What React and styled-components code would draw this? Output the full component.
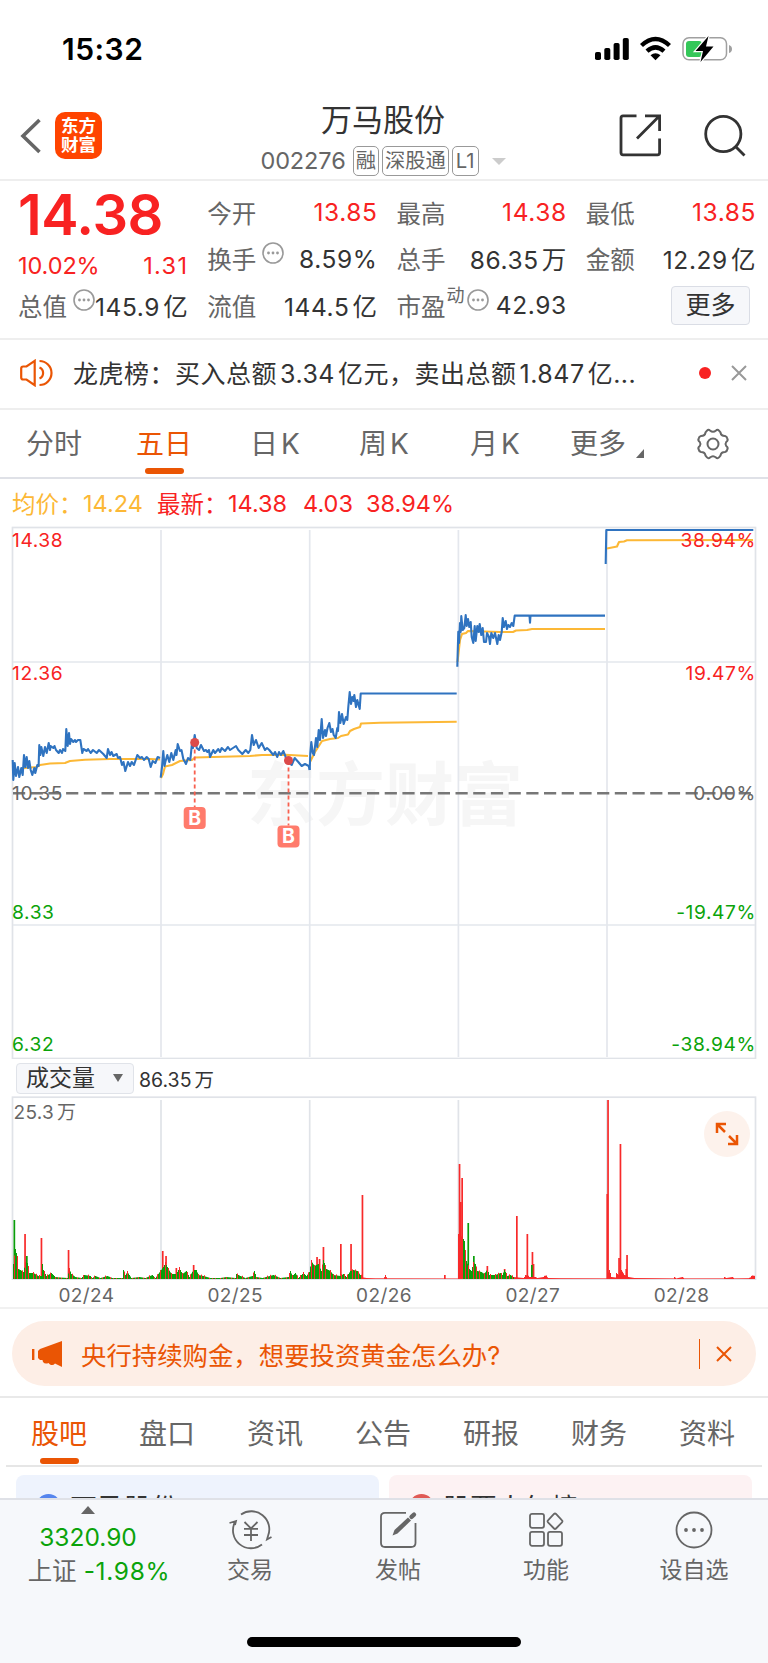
import React from 'react';
import styled, { createGlobalStyle } from 'styled-components';

const FONT = `Inter, "Noto Sans CJK SC", sans-serif`;

const GlobalStyle = createGlobalStyle`
  * {
    box-sizing: border-box;
  }
  body {
    margin: 0;
    background: #ffffff;
    color: #333333;
    font-family: ${FONT};
  }
  svg {
    display: block;
    flex: none;
  }
`;

const Screen = styled.div`
  display: flex;
  flex-direction: column;
  width: 768px;
  height: 1663px;
  overflow: hidden;
  white-space: nowrap;
`;

const StatusBar = styled.div`
  display: flex;
  justify-content: space-between;
  height: 98px;
  padding: 29px 36px 0 62px;
`;

const Clock = styled.div`
  font-size: 30px;
  line-height: 40px;
  font-weight: 600;
  color: #000000;
  letter-spacing: 0.5px;
`;

const Header = styled.div`
  display: flex;
  height: 83px;
  padding: 0 22px 0 20px;
  border-bottom: 2px solid #eeeeee;
`;

const HeaderSide = styled.div`
  display: flex;
  align-items: flex-start;
  justify-content: ${(p) => (p.$end ? 'flex-end' : 'flex-start')};
  gap: ${(p) => (p.$end ? 43 : 14)}px;
  width: 190px;
  padding-top: 14px;
`;

const AppLogo = styled.div`
  width: 47px;
  height: 47px;
  padding: 5px 6px;
  border-radius: 10px;
  background: #ff4400;
  color: #ffffff;
  font-size: 17.5px;
  font-weight: 700;
  line-height: 18.5px;
`;

const HeaderCenter = styled.div`
  flex: 1;
  display: flex;
  flex-direction: column;
  align-items: center;
`;

const StockName = styled.div`
  font-size: 31px;
  line-height: 40px;
  padding-top: 2px;
`;

const CodeRow = styled.div`
  display: flex;
  align-items: center;
  height: 30px;
  margin-top: 6px;
  color: #666666;
`;

const Code = styled.div`
  font-size: 23.5px;
  margin: -2px 7px 0 0;
  letter-spacing: -0.1px;
`;

const Tag = styled.div`
  height: 30px;
  margin-right: 3px;
  padding: 0 ${(p) => p.$pad || 2}px;
  border: 1.5px solid #999999;
  border-radius: 5px;
  font-size: 20.3px;
  line-height: 28px;
`;

const Quote = styled.div`
  display: flex;
  gap: 20px;
  height: 159px;
  padding: 0 13px 0 18px;
  border-bottom: 2px solid #eeeeee;
`;

const QuoteColumn = styled.div`
  flex: 1 1 0;
  min-width: 0;
  display: flex;
  flex-direction: column;
  padding-top: ${(p) => (p.$main ? 0 : 8)}px;
`;

const BigPrice = styled.div`
  height: 67px;
  font-size: 56px;
  font-weight: 600;
  line-height: 68px;
  letter-spacing: -0.4px;
  color: #f82222;
`;

const Change = styled.div`
  display: flex;
  justify-content: space-between;
  height: 34.5px;
  font-size: 23.5px;
  line-height: 35px;
  letter-spacing: -0.1px;
  color: #f82222;

  span:last-child {
    letter-spacing: 1.3px;
    margin-right: -1px;
  }
`;

const Stat = styled.div`
  display: flex;
  align-items: center;
  justify-content: space-between;
  height: 46.6px;
`;

const StatLabel = styled.div`
  display: flex;
  align-items: center;
  font-size: 24.5px;
  color: #666666;

  svg {
    margin: -11px 0 0 6px;
  }
  sup {
    font-size: 18px;
    line-height: 18px;
    margin: -18px -4px 0 1px;
  }
`;

const StatValue = styled.div`
  font-size: 24.5px;
  letter-spacing: 0.6px;
  margin-right: -1px;
  color: ${(p) => (p.$up ? '#f82222' : '#333333')};
`;

const Unit = styled.span`
  margin-left: 3px;
`;

const MoreButton = styled.div`
  width: 79px;
  height: 39px;
  margin: 0 5px 0 auto;
  border: 1.5px solid #dadde5;
  border-radius: 4px;
  background: #f6f7fa;
  font-size: 25px;
  line-height: 36px;
  text-align: center;
`;

const News = styled.div`
  display: flex;
  align-items: center;
  height: 70px;
  padding: 0 21px 2px 20px;
  border-bottom: 2px solid #eeeeee;
  font-size: 25px;
`;

const NewsText = styled.div`
  flex: 1;
  margin: -3px 0 0 20px;
  letter-spacing: 0.5px;
`;

const RedDot = styled.div`
  width: 12px;
  height: 12px;
  margin-right: 20px;
  border-radius: 50%;
  background: #f82222;
`;

const PeriodTabs = styled.div`
  display: flex;
  height: 69px;
  padding-left: 26px;
  border-bottom: 2px solid #dfe1e7;
`;

const PeriodTab = styled.div`
  display: flex;
  flex-direction: column;
  align-items: flex-start;
  width: ${(p) => p.$w}px;
  height: 67px;
  padding-top: 15px;
  font-size: 28px;
  line-height: 38px;
  color: ${(p) => (p.$active ? '#ea5504' : '#666666')};
`;

const TabLine = styled.div`
  width: 39px;
  height: 6px;
  margin: ${(p) => p.$top}px 0 0 9px;
  border-radius: 3px;
  background: #ea5504;
`;

const MoreMark = styled.span`
  display: inline-block;
  margin-left: 10px;
  border-left: 8px solid transparent;
  border-bottom: 9px solid #666666;
  vertical-align: -4px;
`;

const Legend = styled.div`
  display: flex;
  align-items: center;
  height: 47px;
  padding: 1px 0 0 12px;
  font-size: 23.5px;
  color: #f82222;
`;

const LegendItem = styled.div`
  width: ${(p) => p.$w}px;
  color: ${(p) => (p.$avg ? '#fcb836' : '#f82222')};
`;

const ChartBox = styled.div`
  height: ${(p) => p.$h}px;
`;

const IndicatorRow = styled.div`
  display: flex;
  align-items: center;
  gap: 5px;
  height: 37px;
  padding: 1px 0 0 16px;
  font-size: 19.5px;
`;

const IndicatorSelect = styled.div`
  display: flex;
  align-items: center;
  justify-content: space-between;
  width: 118px;
  height: 31px;
  padding: 0 10px 0 9px;
  border: 1.5px solid #e0e3e9;
  border-radius: 4px;
  background: #f6f7fa;
  font-size: 23px;
  line-height: 26px;

  b {
    font-weight: 400;
    margin-top: -1px;
  }
`;

const DownMark = styled.span`
  border: ${(p) => p.$size}px solid transparent;
  border-top: ${(p) => p.$size + (p.$size < 6 ? 3 : 0)}px solid ${(p) => p.$color};
  border-bottom: 0;
`;

const VolumeBox = styled.div`
  position: relative;
  height: 184px;
`;

const ExpandButton = styled.div`
  position: absolute;
  top: 15px;
  right: 18px;
  display: flex;
  align-items: center;
  justify-content: center;
  width: 46px;
  height: 46px;
  border-radius: 50%;
  background: #fdf2ec;
`;

const Dates = styled.div`
  display: grid;
  grid-template-columns: repeat(5, 1fr);
  height: 29px;
  padding: 0 12px;
  border-bottom: 2px solid #f1f1f1;
  font-size: 19px;
  line-height: 31px;
  letter-spacing: 0.4px;
  text-align: center;
  color: #666666;
`;

const BannerWrap = styled.div`
  height: 89px;
  padding: 12px 12px 0;
  border-bottom: 2px solid #e9e9e9;
`;

const Banner = styled.div`
  display: flex;
  align-items: center;
  height: 65px;
  padding: 0 24px 0 20px;
  border-radius: 33px;
  background: #fdeee6;
  color: #ea5504;
  font-size: 25.4px;
`;

const BannerText = styled.div`
  flex: 1;
  margin-left: 17px;
  padding-top: 1px;
`;

const Divider = styled.div`
  width: 1.5px;
  height: 30px;
  margin-right: 16px;
  background: #ea5504;
`;

const InfoTabs = styled.div`
  display: flex;
  height: 69px;
  margin: 0 6px;
  padding-left: 25px;
  border-bottom: 2px solid #e6e6e6;
`;

const InfoTab = styled.div`
  flex: none;
  width: 108px;
  padding-top: 17px;
  font-size: 28px;
  line-height: 38px;
  color: ${(p) => (p.$active ? '#ea5504' : '#666666')};

  &:last-child {
    width: 60px;
  }
`;

const Cards = styled.div`
  display: flex;
  gap: 10px;
  height: 31px;
  padding: 8px 16px 0;
  overflow: hidden;
`;

const Card = styled.div`
  display: flex;
  align-items: flex-start;
  gap: 9px;
  flex: 1;
  height: 70px;
  padding: 16px 20px 0;
  border-radius: 8px;
  background: ${(p) => (p.$red ? '#fdf2f3' : '#eef3fd')};
  font-size: 27px;
  line-height: 36px;
`;

const CardDot = styled.div`
  width: 25px;
  height: 25px;
  margin-top: 3px;
  border-radius: 50%;
  background: ${(p) => (p.$red ? '#e05a55' : '#5585ee')};
`;

const BottomBar = styled.div`
  flex: 1;
  display: flex;
  flex-direction: column;
  align-items: center;
  justify-content: space-between;
  padding-bottom: 16px;
  border-top: 2px solid #dfe1e7;
  background: #f6f8fb;
`;

const Nav = styled.div`
  display: flex;
  width: 100%;
`;

const IndexBlock = styled.div`
  display: flex;
  flex-direction: column;
  align-items: center;
  width: 176px;
  padding-top: 6px;
  color: #0aa30a;
  font-size: 24.5px;
`;

const UpMark = styled.div`
  border: 7px solid transparent;
  border-top: 0;
  border-bottom: 8px solid #666666;
`;

const IndexValue = styled.div`
  height: 34px;
  margin-top: 5px;
  line-height: 36px;
`;

const IndexChange = styled.div`
  padding-left: 22px;
  line-height: 36px;
  letter-spacing: 0.7px;

  span {
    color: #666666;
    margin-right: 7px;
    letter-spacing: 0;
  }
`;

const NavItem = styled.div`
  display: flex;
  flex-direction: column;
  align-items: center;
  width: 148px;
  padding-top: 6px;
  color: #666666;
  font-size: 23px;
  line-height: 36px;
`;

const HomeIndicator = styled.div`
  width: 274px;
  height: 10px;
  border-radius: 5px;
  background: #000000;
`;

function StatusIcons() {
  return (
    <svg width="138" height="28" viewBox="594 36 138 28" style={{ marginTop: 7 }}>
      <rect x="595" y="52" width="6" height="8" rx="1.8" />
      <rect x="604.3" y="48" width="6" height="12" rx="1.8" />
      <rect x="613.6" y="43" width="6" height="17" rx="1.8" />
      <rect x="622.8" y="38" width="6" height="22" rx="1.8" />
      <g fill="none" stroke="#000" strokeWidth="4.4">
        <path d="M641.5 45.5 Q655.5 32.5 669.5 45.5" />
        <path d="M647 51.2 Q655.5 43.5 664 51.2" />
      </g>
      <path d="M650.5 55.3 Q655.5 51.4 660.5 55.3 L655.5 60.2 Z" />
      <rect x="683" y="37.8" width="43.5" height="22" rx="6" fill="none" stroke="#a0a0a0" strokeWidth="1.5" />
      <path d="M729 45 q3 1 3 4 q0 3 -3 4 z" fill="#a0a0a0" />
      <rect x="686" y="41" width="16" height="16" rx="3" fill="#34c759" />
      <path
        d="M708.5 36 L695.5 51 L703 51 L700.5 62 L713.5 46.5 L706 46.5 Z"
        stroke="#fff"
        strokeWidth="2.4"
        paintOrder="stroke"
      />
    </svg>
  );
}

function BackIcon() {
  return (
    <svg width="21" height="47" fill="none" stroke="#666" strokeWidth="3.6">
      <path d="M19.5 8 L3 24 L19.5 40" />
    </svg>
  );
}

function ShareIcon() {
  return (
    <svg width="42" height="43" fill="none" stroke="#333" strokeWidth="2.8" style={{ marginTop: 2 }}>
      <path d="M17.5 1.8 H4 Q2 1.8 2 4 V38.5 Q2 40.8 4 40.8 H38.5 Q40.6 40.8 40.6 38.5 V24.5" />
      <path d="M26 1.8 H40.6 V17 M39.6 2.8 L18 24.6" />
    </svg>
  );
}

function SearchIcon() {
  return (
    <svg width="42" height="43" fill="none" stroke="#333" strokeWidth="2.8" style={{ marginTop: 2 }}>
      <circle cx="19.3" cy="20" r="17.6" />
      <path d="M31.5 32.5 L40.5 41.5" />
    </svg>
  );
}

function InfoIcon() {
  return (
    <svg width="22" height="22" fill="#999">
      <circle cx="11" cy="11" r="10" fill="none" stroke="#999" strokeWidth="1.6" />
      <circle cx="6.5" cy="11" r="1.4" />
      <circle cx="11" cy="11" r="1.4" />
      <circle cx="15.5" cy="11" r="1.4" />
    </svg>
  );
}

function SpeakerIcon() {
  return (
    <svg width="33" height="28" fill="none" stroke="#ea5504" strokeWidth="2.2">
      <path d="M14.7 1.8 L6.5 7.5 H3.2 Q1.2 7.5 1.2 9.5 V18.5 Q1.2 20.5 3.2 20.5 H6.5 L14.7 26.2 Z" />
      <path d="M19.5 8.5 A6 6 0 0 1 19.5 19.5 M19.5 2 A12 12 0 0 1 19.5 26" />
    </svg>
  );
}

function CloseIcon({ color }) {
  return (
    <svg width="16" height="16" fill="none" stroke={color} strokeWidth="2">
      <path d="M1 1 L15 15 M15 1 L1 15" />
    </svg>
  );
}

function SettingsIcon() {
  return (
    <svg width="34" height="32" fill="none" stroke="#666" strokeWidth="2" style={{ marginTop: 18 }}>
      <path d="M11 2.6 Q12.5 1 14 2.5 Q17 5 20 2.5 Q21.5 1 23 2.6 L24.5 4.5 Q25 8 29 8 Q31 8.5 31.3 10.5 Q32.4 12.5 30.2 14 Q28.8 16 30.2 18 Q32.4 19.5 31.3 21.5 Q31 23.5 29 24 Q25 24 24.5 27.5 L23 29.4 Q21.5 31 20 29.5 Q17 27 14 29.5 Q12.5 31 11 29.4 L9.5 27.5 Q9 24 5 24 Q3 23.5 2.7 21.5 Q1.6 19.5 3.8 18 Q5.2 16 3.8 14 Q1.6 12.5 2.7 10.5 Q3 8.5 5 8 Q9 8 9.5 4.5 Z" />
      <circle cx="17" cy="16" r="5.5" />
    </svg>
  );
}

const priceDays = [
  '12.7,760 13.3,780 14.7,763 16,776 18,767 19.3,777 21.3,768 22.7,775 24,755 25.3,767 26.7,757 28,768 29.3,761 30.7,770 32.3,775 34.3,768 35.3,773 37.3,765 38.6,766 39.3,745 40.3,755 41.3,747 43.3,756 45,747 46.7,753 48.7,743 50,750 50.7,746 53.3,748 54.5,746 56,750 58.7,753 60,750 62,753 63,749 65.3,751 66.3,729 67.7,746 69,733 70,744 71,739 73.3,742 75,740 76,742 78,740 80.3,740 82.3,753 83.5,749 86.7,751 88,749 90.7,753 93,750 96.7,753 99,750 103.3,754 106.7,758 108,749 110,755 111.5,752 113.3,756 116.7,754 118,758 120,757 122,765 123.5,762 125.3,771 128,762 130,766 131.7,762 134,765 137.3,755 140,758 142,757 144,760 146.7,757 148.7,759 150.7,767 152.7,761 155.3,763 157.7,757 160,758',
  '160.7,777.7 162,767 163.3,751 164.5,766 165.3,762 167.3,755 169.3,762 171.3,753 173.3,760 175.7,750 176.5,755 177.7,744 180,751 181.5,750 183.3,759 186,764 188,758 190.3,760 192,743 193,748 194.7,735 196.7,748 199,750 201,745 204,751 206,750 207.3,752 209,750 210,757 213.3,750 215,753 218.3,749 220,752 221.7,748 225,751 228,747 230,750 233,748 236,746 238.3,750 242.3,754 245.7,750 248.3,753 250.3,750 252,735 253.7,745 256,740 258.7,748 261.7,743 265,750 267,748 269.3,750 273.3,755 275,752 277.3,757 279,752 281,755 283.3,751 285.3,756 287.3,762 291.7,765 294.7,758 298.3,762 301.7,766 305,764 308.7,766 309.7,770',
  '309.7,770 310.3,753 311.3,742 312.7,753 314,755 316,738 317.3,747 318.7,730 320,740 321.7,719 323,738 325,730 326,736 327.5,728 329.3,723 331,732 332.5,729 333.7,735 335.7,738 337.3,728 338,731 339,712 340.3,723 342,714 343.7,724 346,717 347.3,720 348.3,707 349.7,692 351,704 352.3,697 353.5,701 354.3,695 356,707 357.3,700 359.7,709 360.7,693.5 456.7,693.5',
  '457.3,666.7 458.3,631.7 459,643 460,623 460.7,632 461.3,616 462.7,630 464.3,628 465.7,615 466.7,626 468,619 469.3,627 470.7,622 471.7,637 473.3,643 474.7,626 475.7,641 477.3,626 478.7,632 479.7,624 481.3,635 482.7,628 484,642 486,642 487,633 489,637 490,644 491.3,633 493.3,638 495,633 497.3,644 498.7,635 500,640 501.7,632 502.7,618 504,627 505.7,621 507,629 508.3,625 510,627 511.7,623 513.3,626 514.7,615.6 529.5,615.6 530,622.7 530.5,615.6 605,615.6',
  '605.7,564 606.3,530 753.3,530',
];

const averageDays = [
  '24,768 37,767 40,765 50,763.5 65,763 70,761 85,759.7 110,759 150,759 160,759.5',
  '161,778 163,774 165,766.5 172,765 180,761 192,760 195,757.5 250,756 262,755 285,754.7 308,756',
  '310,762 315,752 322,741 330,739 338,738 341,736 348,734.5 350,731 354,729 360,727 361,723.5 380,722.8 456.7,721.8',
  '457.5,662 460,640 462,634 466,633 468,631 500,632 513,632 516,630.5 527,630 532,629 605,629',
  '607,548.5 617,546.5 619,542 624,541.5 627,540.3 753,540',
];

const priceLabels = [
  { y: 546.5, left: '14.38', right: '38.94%', color: '#f82222' },
  { y: 679.5, left: '12.36', right: '19.47%', color: '#f82222' },
  { y: 799.5, left: '10.35', right: '0.00%', color: '#666666' },
  { y: 918.5, left: '8.33', right: '-19.47%', color: '#0aa30a' },
  { y: 1051, left: '6.32', right: '-38.94%', color: '#0aa30a' },
];

const buys = [
  { x: 194.7, y: 742.5, box: 807 },
  { x: 288.5, y: 760.5, box: 825.5 },
];

const AxisText = styled.text`
  font-size: 19.2px;
  letter-spacing: 0.6px;
`;

function PriceChart() {
  return (
    <svg width="768" height="533" viewBox="0 526 768 533" fontFamily={FONT}>
      <text x="247" y="820" fontSize="69" fontWeight="700" fill="#f6f6f6">
        东方财富
      </text>
      <g stroke="#e4e7ed" strokeWidth="1.7" fill="none">
        <rect x="12.5" y="527.5" width="743" height="531" stroke="#e0e3e8" />
        <path d="M161 530 V1057 M309.7 530 V1057 M458.4 530 V1057 M607 530 V1057" />
        <path d="M13 662 H755 M13 925 H755" />
      </g>
      <path d="M13 793.3 H755" stroke="#777" strokeWidth="2.4" strokeDasharray="12.2 5.5" />
      <g fill="none" strokeLinejoin="round">
        {averageDays.map((points) => (
          <polyline key={points} points={points} stroke="#fcb836" strokeWidth="2.1" />
        ))}
        {priceDays.map((points) => (
          <polyline key={points} points={points} stroke="#2f73c0" strokeWidth="2.1" />
        ))}
      </g>
      {buys.map((b) => (
        <g key={b.x}>
          <path d={`M${b.x} ${b.y} V${b.box}`} stroke="#f8604f" strokeWidth="1.8" strokeDasharray="4 3" />
          <circle cx={b.x} cy={b.y} r="4.5" fill="#dc4a4a" />
          <rect x={b.x - 11} y={b.box} width="22" height="22" rx="4" fill="#ff7b6c" />
          <text x={b.x} y={b.box + 17.8} fontSize="19.5" fontWeight="700" fill="#fff" textAnchor="middle">
            B
          </text>
        </g>
      ))}
      {priceLabels.map((l) => (
        <g key={l.y} fill={l.color}>
          <AxisText x="12" y={l.y}>{l.left}</AxisText>
          <AxisText x="756" y={l.y} textAnchor="end">{l.right}</AxisText>
        </g>
      ))}
    </svg>
  );
}

// x, height of the trading volume outline
const volumeOutline = [
  [13, 15], [15, 30], [17, 22], [18, 10], [20, 9], [23, 7], [26, 20], [28, 12], [29, 6], [33, 6], [38, 3],
  [41, 3], [42, 15], [43, 9], [46, 3], [51, 6], [55, 2], [60, 1.5], [67, 1], [69, 10], [71, 5], [75, 2], [81, 1],
  [84, 4], [90, 3], [92, 1], [95, 3], [100, 1], [107, 3], [112, 1], [122, 1], [123, 9], [125, 4], [127, 7],
  [131, 1], [139, 2], [145, 1], [152, 4], [155, 1], [160, 8], [163, 12], [165, 16], [168, 10], [171, 5], [176, 5],
  [179, 11], [182, 5], [186, 8], [189, 2], [193, 9], [196, 9], [198, 4], [203, 3], [210, 1], [220, 1], [226, 2],
  [235, 1], [236, 5], [240, 3], [245, 1], [252, 3], [254, 8], [256, 2], [262, 1], [273, 4], [280, 1], [288, 2],
  [290, 8], [292, 3], [295, 6], [298, 1], [303, 6], [306, 3], [309, 7], [311, 18], [314, 13], [318, 15], [321, 8],
  [323, 19], [326, 10], [330, 8], [333, 4], [340, 3], [343, 5], [346, 2], [350, 8], [353, 9], [357, 8], [360, 4],
  [363, 1.5], [366, 1], [375, 0.7], [383, 0.7], [385, 3], [387, 0.7], [457, 0.5], [458, 44], [463, 40], [464, 38],
  [466, 18], [469, 10], [471, 8], [473, 16], [475, 15], [477, 8], [481, 7], [484, 5], [487, 10], [489, 4],
  [495, 4], [500, 6], [502, 4], [504, 9], [507, 3], [510, 4], [513, 2], [523, 1], [525, 3], [529, 2], [535, 2],
  [537, 1], [546, 2.5], [548, 1], [560, 0.8], [606, 0.6], [609, 8], [611, 2], [615, 1.5], [616, 5], [618, 3],
  [621, 8], [624, 3], [628, 2], [634, 1], [673, 0.6], [674, 2], [676, 0.6], [682, 2], [684, 0.6], [723, 0.6],
  [724, 2], [726, 1], [732, 2], [734, 0.6], [748, 0.8], [752, 2.5], [755, 2],
];

const volumeSpikes = [
  [14.3, 59, 'g'], [25, 45], [26.8, 23, 'g'], [41.4, 41], [68.5, 29], [162.7, 28], [166, 23], [176.3, 11],
  [193.6, 14], [317, 22], [319.5, 20], [323.4, 32], [340.8, 35], [351, 35], [362.4, 84], [444.8, 4], [459.5, 115],
  [460.8, 77], [462.1, 101], [468.2, 56, 'g'], [473.8, 23, 'g'], [487.3, 13], [504.6, 10], [516.8, 63],
  [527.3, 45], [532.4, 27], [533.5, 15], [531.8, 14, 'g'], [607.2, 85], [608, 179], [619, 21], [620.4, 135],
  [626.2, 10], [627, 24],
];

function volumeBars() {
  const bars = [];
  let i = 0;
  for (let x = 13; x < 755; x += 1) {
    while (i < volumeOutline.length - 2 && volumeOutline[i + 1][0] < x) i += 1;
    const [x0, h0] = volumeOutline[i];
    const [x1, h1] = volumeOutline[i + 1];
    const t = Math.max(0, (x - x0) / (x1 - x0));
    const h = h0 + (h1 - h0) * t;
    const mixed = x < 361 || (x > 461 && x < 514);
    bars.push({ x, h, up: !mixed || (x * 37) % 11 < 3 });
  }
  return bars;
}

function VolumeChart() {
  return (
    <svg width="768" height="184" viewBox="0 1096 768 184" fontFamily={FONT}>
      <g stroke="#e0e3e8" strokeWidth="1.7" fill="none">
        <rect x="12.5" y="1097.2" width="743" height="182.3" />
        <path d="M161 1100 V1279 M309.7 1100 V1279 M458.4 1100 V1279 M607 1100 V1279" />
      </g>
      {volumeSpikes.map(([x, h, side]) => (
        <rect key={x} x={x - 0.8} y={1279 - h} width="1.7" height={h} fill={side ? '#0a9e0a' : '#f82a2a'} />
      ))}
      {volumeBars().map((b) => {
        const h = b.up && b.h > 2 ? b.h + 1 : b.h;
        return <rect key={b.x} x={b.x} y={1279 - h} width="1" height={h} fill={b.up ? '#f82a2a' : '#0a9e0a'} />;
      })}
      <text x="13.5" y="1119" fontSize="19" fill="#666" letterSpacing="0.3">
        25.3<tspan dx="3">万</tspan>
      </text>
    </svg>
  );
}

function ExpandIcon() {
  return (
    <svg width="24" height="24" fill="none" stroke="#ea5504" strokeWidth="2.5">
      <path d="M2 11 V2 H11 M2.5 2.5 L10 10" />
      <path d="M22 13 V22 H13 M21.5 21.5 L14 14" />
    </svg>
  );
}

function MegaphoneIcon() {
  return (
    <svg width="32" height="26" fill="#ea5504">
      <rect x="0" y="8" width="2.4" height="11" />
      <path d="M30 0 V26 L23 22.5 Q21 25 18 23.5 L16.5 22 Q13 23.5 11 21 L10.5 19 H8 L6 17 V10 L8 8 Z" />
    </svg>
  );
}

function TradeIcon() {
  return (
    <svg width="44" height="46" viewBox="-1 0 44 46" fill="none" stroke="#666" strokeWidth="1.8">
      <path d="M12 8.5 A18 18 0 0 1 39 30 M39 30 L38 33.5 L42.5 31" />
      <path d="M33 38.5 A18 18 0 0 1 6 16 M0.5 17 L7 15 L6 19" />
      <path d="M15.5 16 L22 22.5 L28.5 16 M22 22.5 V35 M15 22.8 H29 M15 29 H29" />
    </svg>
  );
}

function PostIcon() {
  return (
    <svg width="44" height="46" fill="none" stroke="#666" strokeWidth="1.8">
      <path d="M30 6.8 H9 Q5 6.8 5 10.5 V37 Q5 41 9 41 H35 Q39.5 41 39.5 37 V17" />
      <path d="M16.5 29.5 L18.5 24 L32 11.5 L35 14.5 L21.5 27.5 Z" fill="#666" stroke="none" />
      <path d="M35.5 10.8 L38 8.6" strokeWidth="4.4" strokeLinecap="round" />
    </svg>
  );
}

function GridIcon() {
  return (
    <svg width="44" height="46" fill="none" stroke="#666" strokeWidth="1.8">
      <rect x="6" y="7.8" width="14" height="14" rx="2" />
      <rect x="6" y="25.8" width="14" height="14" rx="2" />
      <rect x="24" y="25.8" width="14" height="14" rx="2" />
      <path d="M30 8 Q31 7 32 8 L38 14.3 Q39 15.3 38 16.3 L32 22.5 Q31 23.5 30 22.5 L24 16.3 Q23 15.3 24 14.3 Z" />
    </svg>
  );
}

function OptionIcon() {
  return (
    <svg width="44" height="46" fill="#666">
      <circle cx="22" cy="24" r="17.5" fill="none" stroke="#666" strokeWidth="1.8" />
      <circle cx="14" cy="24" r="1.9" />
      <circle cx="22" cy="24" r="1.9" />
      <circle cx="30" cy="24" r="1.9" />
    </svg>
  );
}

function App() {
  return (
    <>
      <GlobalStyle />
      <Screen>
        <StatusBar>
          <Clock>15:32</Clock>
          <StatusIcons />
        </StatusBar>

        <Header>
          <HeaderSide>
            <BackIcon />
            <AppLogo>
              东方
              <br />
              财富
            </AppLogo>
          </HeaderSide>
          <HeaderCenter>
            <StockName>万马股份</StockName>
            <CodeRow>
              <Code>002276</Code>
              <Tag>融</Tag>
              <Tag>深股通</Tag>
              <Tag $pad={3}>L1</Tag>
              <DownMark $size={7} $color="#cccccc" style={{ marginLeft: 10 }} />
            </CodeRow>
          </HeaderCenter>
          <HeaderSide $end>
            <ShareIcon />
            <SearchIcon />
          </HeaderSide>
        </Header>

        <Quote>
          <QuoteColumn $main>
            <BigPrice>14.38</BigPrice>
            <Change>
              <span>10.02%</span>
              <span>1.31</span>
            </Change>
            <Stat>
              <StatLabel>总值<InfoIcon /></StatLabel>
              <StatValue>145.9<Unit>亿</Unit></StatValue>
            </Stat>
          </QuoteColumn>
          <QuoteColumn>
            <Stat>
              <StatLabel>今开</StatLabel>
              <StatValue $up>13.85</StatValue>
            </Stat>
            <Stat>
              <StatLabel>换手<InfoIcon /></StatLabel>
              <StatValue>8.59%</StatValue>
            </Stat>
            <Stat>
              <StatLabel>流值</StatLabel>
              <StatValue>144.5<Unit>亿</Unit></StatValue>
            </Stat>
          </QuoteColumn>
          <QuoteColumn>
            <Stat>
              <StatLabel>最高</StatLabel>
              <StatValue $up>14.38</StatValue>
            </Stat>
            <Stat>
              <StatLabel>总手</StatLabel>
              <StatValue>86.35<Unit>万</Unit></StatValue>
            </Stat>
            <Stat>
              <StatLabel>市盈<sup>动</sup><InfoIcon /></StatLabel>
              <StatValue>42.93</StatValue>
            </Stat>
          </QuoteColumn>
          <QuoteColumn>
            <Stat>
              <StatLabel>最低</StatLabel>
              <StatValue $up>13.85</StatValue>
            </Stat>
            <Stat>
              <StatLabel>金额</StatLabel>
              <StatValue>12.29<Unit>亿</Unit></StatValue>
            </Stat>
            <Stat>
              <MoreButton>更多</MoreButton>
            </Stat>
          </QuoteColumn>
        </Quote>

        <News>
          <SpeakerIcon />
          <NewsText>
            龙虎榜：买入总额<Unit>3.34</Unit><Unit>亿元，卖出总额</Unit><Unit>1.847</Unit><Unit>亿...</Unit>
          </NewsText>
          <RedDot />
          <CloseIcon color="#999999" />
        </News>

        <PeriodTabs>
          <PeriodTab $w={110}>分时</PeriodTab>
          <PeriodTab $w={114} $active>
            五日
            <TabLine $top={5} />
          </PeriodTab>
          <PeriodTab $w={109}><span>日<Unit>K</Unit></span></PeriodTab>
          <PeriodTab $w={111}><span>周<Unit>K</Unit></span></PeriodTab>
          <PeriodTab $w={100}><span>月<Unit>K</Unit></span></PeriodTab>
          <PeriodTab $w={126}><span>更多<MoreMark /></span></PeriodTab>
          <SettingsIcon />
        </PeriodTabs>

        <Legend>
          <LegendItem $w={71} $avg>均价：</LegendItem>
          <LegendItem $w={74} $avg>14.24</LegendItem>
          <LegendItem $w={71}>最新：</LegendItem>
          <LegendItem $w={75}>14.38</LegendItem>
          <LegendItem $w={63}>4.03</LegendItem>
          <LegendItem $w={100}>38.94%</LegendItem>
        </Legend>

        <ChartBox $h={533}>
          <PriceChart />
        </ChartBox>

        <IndicatorRow>
          <IndicatorSelect>
            <b>成交量</b>
            <DownMark $size={5} $color="#666666" />
          </IndicatorSelect>
          <div>86.35<Unit>万</Unit></div>
        </IndicatorRow>

        <VolumeBox>
          <VolumeChart />
          <ExpandButton>
            <ExpandIcon />
          </ExpandButton>
        </VolumeBox>

        <Dates>
          <div>02/24</div>
          <div>02/25</div>
          <div>02/26</div>
          <div>02/27</div>
          <div>02/28</div>
        </Dates>

        <BannerWrap>
          <Banner>
            <MegaphoneIcon />
            <BannerText>央行持续购金，想要投资黄金怎么办?</BannerText>
            <Divider />
            <CloseIcon color="#ea5504" />
          </Banner>
        </BannerWrap>

        <InfoTabs>
          <InfoTab $active>
            股吧
            <TabLine $top={5} />
          </InfoTab>
          <InfoTab>盘口</InfoTab>
          <InfoTab>资讯</InfoTab>
          <InfoTab>公告</InfoTab>
          <InfoTab>研报</InfoTab>
          <InfoTab>财务</InfoTab>
          <InfoTab>资料</InfoTab>
        </InfoTabs>

        <Cards>
          <Card>
            <CardDot />
            万马股份
          </Card>
          <Card $red>
            <CardDot $red />
            股票人气榜
          </Card>
        </Cards>

        <BottomBar>
          <Nav>
            <IndexBlock>
              <UpMark />
              <IndexValue>3320.90</IndexValue>
              <IndexChange><span>上证</span>-1.98%</IndexChange>
            </IndexBlock>
            <NavItem><TradeIcon />交易</NavItem>
            <NavItem><PostIcon />发帖</NavItem>
            <NavItem><GridIcon />功能</NavItem>
            <NavItem><OptionIcon />设自选</NavItem>
          </Nav>
          <HomeIndicator />
        </BottomBar>
      </Screen>
    </>
  );
}

export default App;
